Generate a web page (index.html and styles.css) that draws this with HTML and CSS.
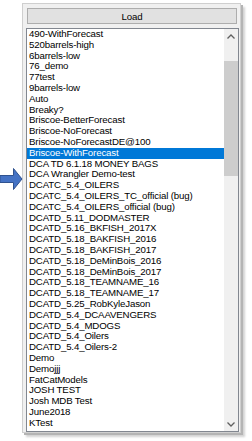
FILE: index.html
```html
<!DOCTYPE html>
<html>
<head>
<meta charset="utf-8">
<link rel="stylesheet" href="styles.css">
</head>
<body>
<div class="stage">
  <svg class="pointer" width="23" height="24" viewBox="0 0 23 24">
    <path d="M0 8.5 H13.5 V1.5 L22 12 L13.5 22.5 V15.5 H0 Z" fill="#4472c4" stroke="#2f528f" stroke-width="1"/>
  </svg>
  <div class="window">
    <div class="load-btn">Load</div>
    <div class="listbox">
      <ul class="items">
        <li>490-WithForecast</li>
        <li>520barrels-high</li>
        <li>6barrels-low</li>
        <li>76_demo</li>
        <li>77test</li>
        <li>9barrels-low</li>
        <li>Auto</li>
        <li>Breaky?</li>
        <li>Briscoe-BetterForecast</li>
        <li>Briscoe-NoForecast</li>
        <li>Briscoe-NoForecastDE@100</li>
        <li class="selected">Briscoe-WithForecast</li>
        <li>DCA TD 6.1.18 MONEY BAGS</li>
        <li>DCA Wrangler Demo-test</li>
        <li>DCATC_5.4_OILERS</li>
        <li>DCATC_5.4_OILERS_TC_official (bug)</li>
        <li>DCATC_5.4_OILERS_official (bug)</li>
        <li>DCATD_5.11_DODMASTER</li>
        <li>DCATD_5.16_BKFISH_2017X</li>
        <li>DCATD_5.18_BAKFISH_2016</li>
        <li>DCATD_5.18_BAKFISH_2017</li>
        <li>DCATD_5.18_DeMinBois_2016</li>
        <li>DCATD_5.18_DeMinBois_2017</li>
        <li>DCATD_5.18_TEAMNAME_16</li>
        <li>DCATD_5.18_TEAMNAME_17</li>
        <li>DCATD_5.25_RobKyleJason</li>
        <li>DCATD_5.4_DCAAVENGERS</li>
        <li>DCATD_5.4_MDOGS</li>
        <li>DCATD_5.4_Oilers</li>
        <li>DCATD_5.4_Oilers-2</li>
        <li>Demo</li>
        <li>Demojjj</li>
        <li>FatCatModels</li>
        <li>JOSH TEST</li>
        <li>Josh MDB Test</li>
        <li>June2018</li>
        <li>KTest</li>
      </ul>
      <div class="scrollbar">
        <div class="sb-btn">
          <svg width="8" height="5" viewBox="0 0 8 5"><path d="M0.5 4.5 L4 1 L7.5 4.5" fill="none" stroke="#606060" stroke-width="1.3"/></svg>
        </div>
        <div class="sb-track">
          <div class="sb-thumb"></div>
        </div>
        <div class="sb-btn">
          <svg width="8" height="5" viewBox="0 0 8 5"><path d="M0.5 0.5 L4 4 L7.5 0.5" fill="none" stroke="#606060" stroke-width="1.3"/></svg>
        </div>
      </div>
    </div>
  </div>
</div>
</body>
</html>
```

FILE: styles.css
```css
html, body {
  margin: 0;
  padding: 0;
  background: #ffffff;
}
.stage {
  position: relative;
  width: 252px;
  height: 441px;
  padding: 3px 0 0 22px;
  box-sizing: border-box;
}
.pointer {
  position: absolute;
  left: 0;
  top: 167px;
}
.window {
  width: 219px;
  height: 430px;
  box-sizing: border-box;
  background: #f0f0f0;
  border: 1px solid #cfcfcf;
  box-shadow: 2px 2px 0 #b4b4b4, 4px 4px 2px rgba(0,0,0,0.18);
  padding: 4px 1px 0 3px;
  display: flex;
  flex-direction: column;
  font-family: "Liberation Sans", Arial, sans-serif;
  font-size: 9.7px;
  color: #000;
}
.load-btn {
  margin: 0 2px 0 1px;
  height: 16px;
  box-sizing: border-box;
  border: 1px solid #adadad;
  background: #e1e1e1;
  display: flex;
  align-items: center;
  justify-content: center;
  letter-spacing: -0.1px;
}
.listbox {
  margin-top: 4px;
  height: 404px;
  box-sizing: border-box;
  border: 1px solid #828790;
  background: #fff;
  display: flex;
}
.items {
  list-style: none;
  margin: 0;
  padding: 0;
  flex: 1;
  min-width: 0;
  overflow: hidden;
}
.items li {
  height: 10.8px;
  line-height: 10.8px;
  padding-left: 2px;
  white-space: nowrap;
  letter-spacing: -0.15px;
}
.items li.selected {
  background: #0078d7;
  color: #fff;
}
.scrollbar {
  width: 14px;
  background: #f0f0f0;
  display: flex;
  flex-direction: column;
}
.sb-btn {
  height: 14px;
  display: flex;
  align-items: center;
  justify-content: center;
}
.sb-track {
  flex: 1;
  padding-top: 18px;
}
.sb-thumb {
  height: 115px;
  background: #cdcdcd;
}
```
